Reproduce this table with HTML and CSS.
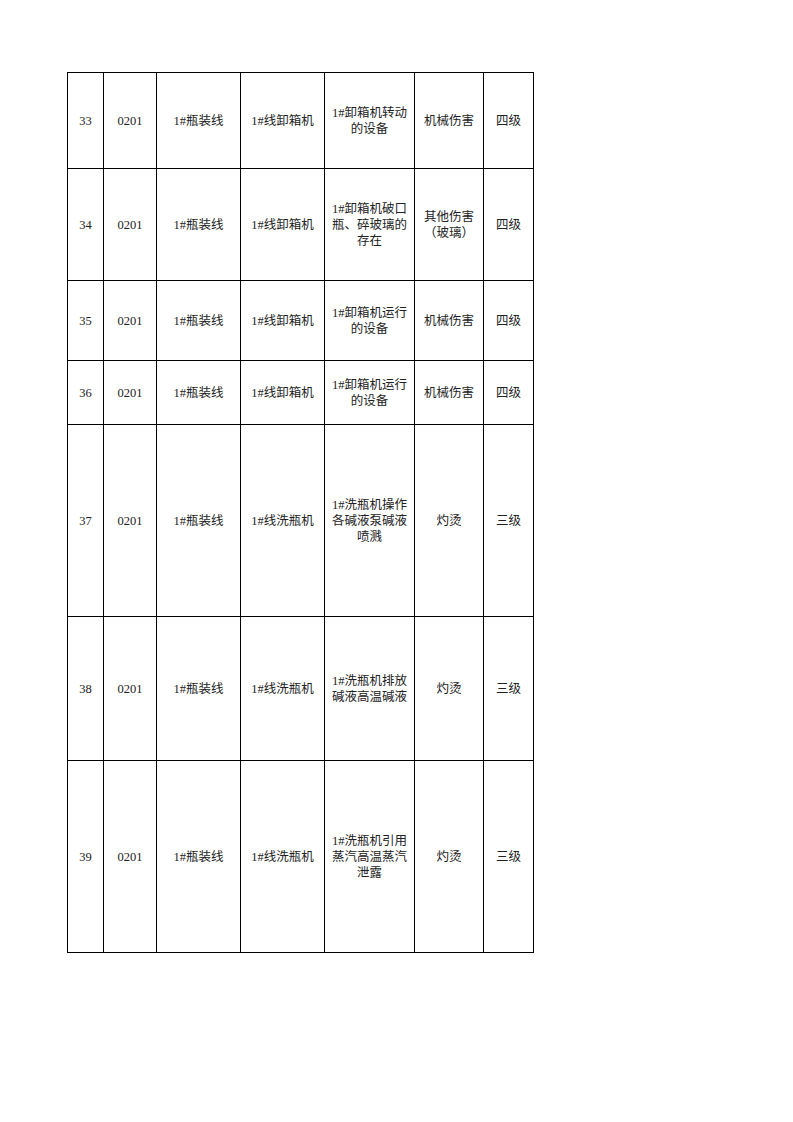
FILE: index.html
```html
<!DOCTYPE html>
<html lang="zh">
<head>
<meta charset="utf-8">
<link rel="stylesheet" href="styles.css">
</head>
<body>
<table class="sheet">
<colgroup>
<col class="c1"><col class="c2"><col class="c3"><col class="c4"><col class="c5"><col class="c6"><col class="c7">
</colgroup>
<tbody>
<tr class="r96"><td>33</td><td>0201</td><td>1#瓶装线</td><td>1#线卸箱机</td><td>1#卸箱机转动<br>的设备</td><td>机械伤害</td><td>四级</td></tr>
<tr class="r112"><td>34</td><td>0201</td><td>1#瓶装线</td><td>1#线卸箱机</td><td>1#卸箱机破口<br>瓶、碎玻璃的<br>存在</td><td>其他伤害<br>（玻璃）</td><td>四级</td></tr>
<tr class="r80"><td>35</td><td>0201</td><td>1#瓶装线</td><td>1#线卸箱机</td><td>1#卸箱机运行<br>的设备</td><td>机械伤害</td><td>四级</td></tr>
<tr class="r64"><td>36</td><td>0201</td><td>1#瓶装线</td><td>1#线卸箱机</td><td>1#卸箱机运行<br>的设备</td><td>机械伤害</td><td>四级</td></tr>
<tr class="r192"><td>37</td><td>0201</td><td>1#瓶装线</td><td>1#线洗瓶机</td><td>1#洗瓶机操作<br>各碱液泵碱液<br>喷溅</td><td>灼烫</td><td>三级</td></tr>
<tr class="r144"><td>38</td><td>0201</td><td>1#瓶装线</td><td>1#线洗瓶机</td><td>1#洗瓶机排放<br>碱液高温碱液</td><td>灼烫</td><td>三级</td></tr>
<tr class="r192"><td>39</td><td>0201</td><td>1#瓶装线</td><td>1#线洗瓶机</td><td>1#洗瓶机引用<br>蒸汽高温蒸汽<br>泄露</td><td>灼烫</td><td>三级</td></tr>
</tbody>
</table>
</body>
</html>
```
FILE: styles.css
```css
html, body {
  margin: 0;
  padding: 0;
  background: #fff;
}
body {
  padding: 72px 0 0 67px;
  font-family: "Liberation Serif", "Noto Sans CJK SC", serif;
  font-size: 12.5px;
  color: #222;
}
.sheet {
  border-collapse: collapse;
  table-layout: fixed;
  width: 467px;
}
.sheet td {
  border: 1px solid #000;
  padding: 0;
  text-align: center;
  vertical-align: middle;
  line-height: 16px;
  white-space: nowrap;
  overflow: hidden;
}
.c1 { width: 36px; }
.c2 { width: 53px; }
.c3 { width: 84px; }
.c4 { width: 84px; }
.c5 { width: 90px; }
.c6 { width: 69px; }
.c7 { width: 50px; }
.r96 { height: 96px; }
.r112 { height: 112px; }
.r80 { height: 80px; }
.r64 { height: 64px; }
.r192 { height: 192px; }
.r144 { height: 144px; }
```
